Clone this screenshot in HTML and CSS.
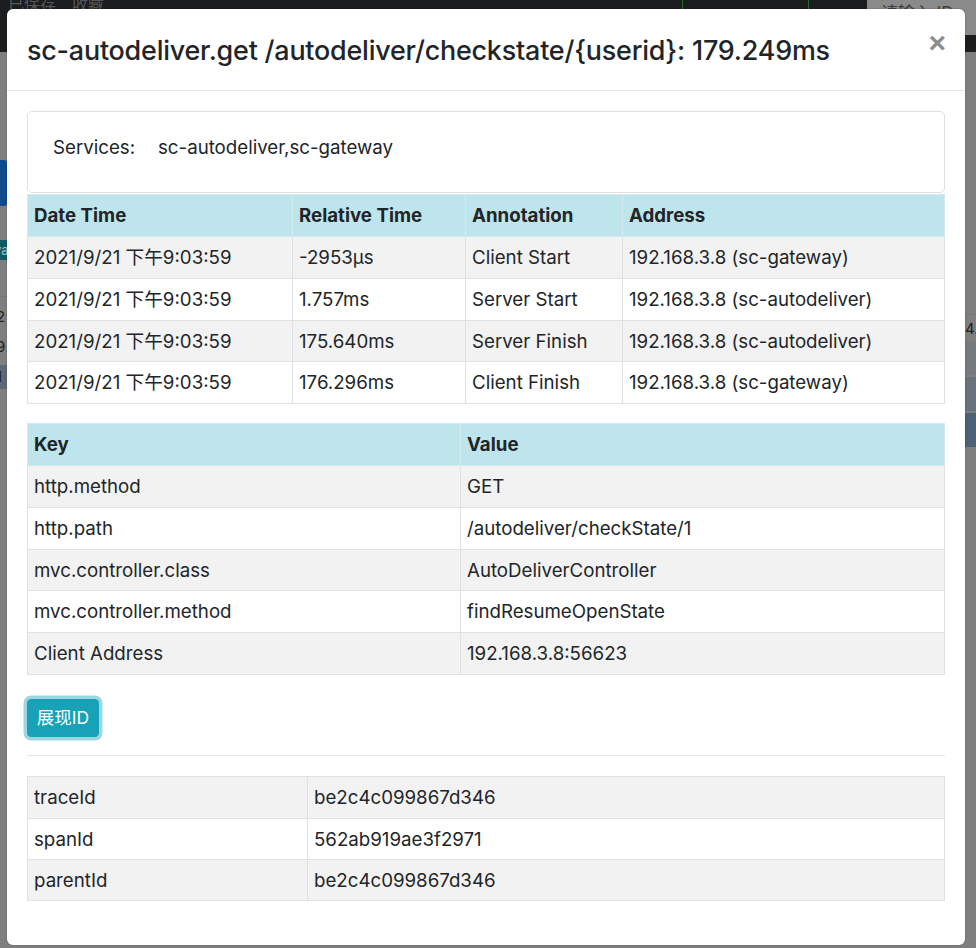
FILE: index.html
```html
<!DOCTYPE html>
<html lang="zh">
<head>
<meta charset="utf-8">
<title>Trace detail</title>
<link rel="stylesheet" href="styles.css">
</head>
<body>
<div class="page">
  <header class="navbar">
    <div class="nav-brand">已保存　收藏</div>
    <div class="nav-tab"><span class="nav-tab-text">Trace ID</span></div>
    <div class="nav-search">请输入 ID</div>
  </header>
  <main class="bg-main">
    <div class="bg-left">
      <div class="bg-btn"></div>
      <div class="bg-tag">va</div>
      <div class="bg-rule"></div>
      <div class="bg-num">2</div>
      <div class="bg-num">9</div>
      <div class="bg-num bg-band">1</div>
    </div>
    <div class="bg-right">
      <div class="bg-rule r"></div>
      <div class="bg-num r">4.1</div>
      <div class="bg-rband b1"></div>
      <div class="bg-rband b2"></div>
      <div class="bg-rband b3"></div>
    </div>
  </main>
</div>

<div class="modal">
  <div class="modal-header">
    <h5 class="modal-title">sc-autodeliver.get /autodeliver/checkstate/{userid}: 179.249ms</h5>
    <button class="close" type="button">×</button>
  </div>
  <div class="modal-body">
    <div class="card">
      <span class="card-label">Services:</span>
      <span class="card-value">sc-autodeliver,sc-gateway</span>
    </div>
    <table class="tbl t1">
      <colgroup><col class="c1"><col class="c2"><col class="c3"><col class="c4"></colgroup>
      <thead>
        <tr><th>Date Time</th><th>Relative Time</th><th>Annotation</th><th>Address</th></tr>
      </thead>
      <tbody>
        <tr><td>2021/9/21 下午9:03:59</td><td>-2953μs</td><td>Client Start</td><td>192.168.3.8 (sc-gateway)</td></tr>
        <tr><td>2021/9/21 下午9:03:59</td><td>1.757ms</td><td>Server Start</td><td>192.168.3.8 (sc-autodeliver)</td></tr>
        <tr class="short"><td>2021/9/21 下午9:03:59</td><td>175.640ms</td><td>Server Finish</td><td>192.168.3.8 (sc-autodeliver)</td></tr>
        <tr><td>2021/9/21 下午9:03:59</td><td>176.296ms</td><td>Client Finish</td><td>192.168.3.8 (sc-gateway)</td></tr>
      </tbody>
    </table>
    <table class="tbl t2">
      <colgroup><col class="k1"><col class="k2"></colgroup>
      <thead>
        <tr><th>Key</th><th>Value</th></tr>
      </thead>
      <tbody>
        <tr><td>http.method</td><td>GET</td></tr>
        <tr><td>http.path</td><td>/autodeliver/checkState/1</td></tr>
        <tr class="short"><td>mvc.controller.class</td><td>AutoDeliverController</td></tr>
        <tr><td>mvc.controller.method</td><td>findResumeOpenState</td></tr>
        <tr><td>Client Address</td><td>192.168.3.8:56623</td></tr>
      </tbody>
    </table>
    <button class="btn-info" type="button">展现ID</button>
    <hr class="divider">
    <table class="tbl t3">
      <colgroup><col class="i1"><col class="i2"></colgroup>
      <tbody>
        <tr><td>traceId</td><td>be2c4c099867d346</td></tr>
        <tr class="short"><td>spanId</td><td>562ab919ae3f2971</td></tr>
        <tr class="short"><td>parentId</td><td>be2c4c099867d346</td></tr>
      </tbody>
    </table>
  </div>
</div>
</body>
</html>
```
FILE: styles.css
```css
* { box-sizing: border-box; }
html, body {
  margin: 0;
  padding: 0;
  height: 100%;
}
body {
  background: #7f7f7f;
  font-family: Inter, "Noto Sans CJK SC", sans-serif;
  color: #212529;
  overflow: hidden;
  position: relative;
}

/* ---------- dimmed page behind the modal ---------- */
.page {
  height: 100%;
  display: flex;
  flex-direction: column;
}
.navbar {
  height: 52px;
  background: #1b1d1f;
  display: flex;
  align-items: flex-start;
  flex-shrink: 0;
}
.nav-brand {
  padding-left: 8px;
  margin-top: -9px;
  font-size: 16px;
  color: #56595c;
  width: 682px;
}
.nav-tab {
  width: 127px;
  height: 9px;
  border-left: 1px solid #2e6b34;
  border-right: 1px solid #2e6b34;
  overflow: hidden;
}
.nav-tab-text { display: none; }
.nav-search {
  margin-left: 58px;
  flex: 1;
  height: 35px;
  background: #8a8a8a;
  color: #3d3d3d;
  font-size: 17px;
  padding: 4px 0 0 14px;
  line-height: 18px;
}

.bg-main {
  flex: 1;
  display: flex;
  justify-content: space-between;
}
.bg-left {
  width: 7px;
  display: flex;
  flex-direction: column;
}
.bg-btn {
  margin-top: 108px;
  height: 46px;
  background: #0f4a8c;
  border-radius: 0 3px 3px 0;
}
.bg-tag {
  margin-top: 34px;
  height: 20px;
  background: #0e5b66;
  color: #9fb9bd;
  font-size: 13px;
  line-height: 20px;
  text-indent: -6px;
  overflow: hidden;
}
.bg-rule {
  margin-top: 36px;
  height: 1px;
  background: #767676;
}
.bg-num {
  margin-top: 10px;
  height: 20px;
  font-size: 15px;
  line-height: 20px;
  color: #202020;
  text-indent: -4px;
  overflow: hidden;
}
.bg-num.bg-band {
  margin-top: 8px;
  height: 24px;
  line-height: 24px;
  background: #5d6a75;
}
.bg-right {
  width: 11px;
  display: flex;
  flex-direction: column;
}
.bg-rule.r { margin-top: 262px; }
.bg-num.r { margin-top: 4px; text-indent: 0; }
.bg-rband { height: 34px; margin-top: 2px; }
.bg-rband.b1 { background: #777a7d; }
.bg-rband.b2 { background: #6a737c; }
.bg-rband.b3 { background: #4c6177; }

/* ---------- modal ---------- */
.modal {
  position: absolute;
  left: 7px;
  top: 9px;
  width: 958px;
  height: 936px;
  background: #fff;
  border-radius: 6px;
  box-shadow: 0 0 2px rgba(0,0,0,.25);
  display: flex;
  flex-direction: column;
}
.modal-header {
  height: 82px;
  border-bottom: 1px solid #e6e6e6;
  display: flex;
  align-items: flex-start;
  justify-content: space-between;
  padding: 0 20px;
}
.modal-title {
  margin: 25px 0 0 0;
  font-size: 26.9px;
  font-weight: 500;
  line-height: 32px;
  letter-spacing: -0.2px;
  color: #212529;
}
.close {
  margin-top: 18px;
  margin-right: -1px;
  background: none;
  border: 0;
  padding: 0;
  font-family: "Liberation Sans", sans-serif;
  font-size: 30px;
  font-weight: 700;
  line-height: 32px;
  color: #8d8d8d;
}
.modal-body {
  padding: 20px 20px 0 20px;
}
.card {
  height: 82px;
  border: 1px solid #e0e0e0;
  border-radius: 5px;
  padding: 22px 0 0 25px;
  display: flex;
  align-items: flex-start;
  font-size: 18.7px;
  line-height: 27px;
}
.card-label { width: 105px; }

.tbl {
  width: 100%;
  border-collapse: collapse;
  font-size: 18.7px;
  line-height: 27px;
}
.tbl th, .tbl td {
  border: 1px solid #dee2e6;
  padding: 7px 5px 7px 6px;
  text-align: left;
  white-space: nowrap;
  height: 42px;
}
.tbl tr.short td {
  height: 41px;
  padding-top: 6.5px;
  padding-bottom: 6.5px;
}
.tbl th {
  background: #bee5eb;
  font-weight: 700;
  border-color: #d3eaee;
}
.tbl tbody tr:nth-child(odd) td { background: #f2f2f2; }
.t1 { margin-top: 1px; }
.t2 { margin-top: 19px; }
.c1 { width: 265px; }
.c2 { width: 173px; }
.c3 { width: 157px; }
.k1 { width: 433px; }
.i1 { width: 280px; }

.btn-info {
  display: block;
  margin: 24px 0 0 0;
  height: 38px;
  width: 72px;
  padding: 0;
  border: 1px solid #17a2b8;
  border-radius: 4px;
  background: #17a2b8;
  color: #fff;
  font-family: Inter, "Noto Sans CJK SC", sans-serif;
  font-size: 17.5px;
  line-height: 36px;
  box-shadow: 0 0 0 3.5px rgba(58,176,195,.5);
}
.divider {
  margin: 18px 0 0 0;
  border: 0;
  border-top: 1px solid #e6e6e6;
  height: 0;
}
.t3 { margin-top: 20px; }
```
